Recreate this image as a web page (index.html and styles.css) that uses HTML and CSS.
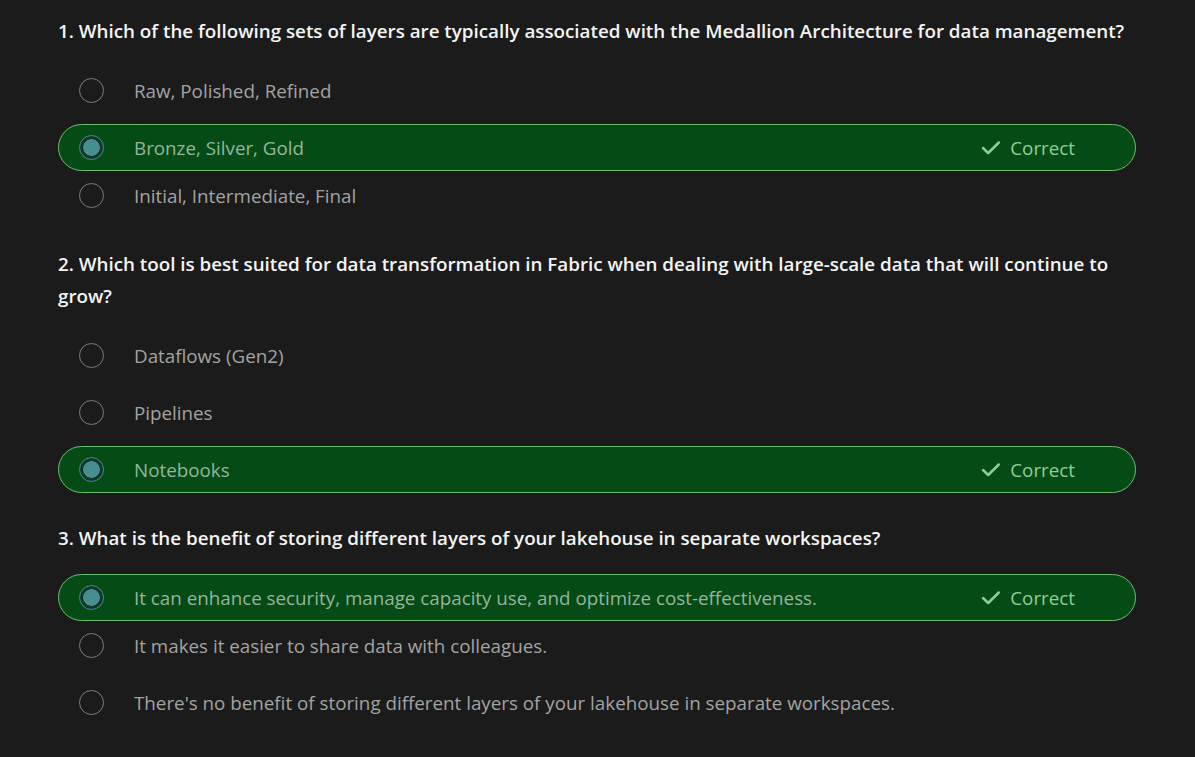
FILE: index.html
```html
<!DOCTYPE html>
<html lang="en">
<head>
<meta charset="utf-8">
<title>Knowledge check</title>
<link rel="stylesheet" href="styles.css">
</head>
<body>
<main class="quiz">
  <section class="question">
    <h2 class="q-title">1. Which of the following sets of layers are typically associated with the Medallion Architecture for data management?</h2>
    <ul class="options">
      <li class="option"><span class="radio"></span><span class="label">Raw, Polished, Refined</span></li>
      <li class="option correct"><span class="radio"></span><span class="label">Bronze, Silver, Gold</span><span class="status"><svg class="check" viewBox="0 0 20 16" width="20" height="16"><path d="M2 8 L7.2 13 L17.8 2.5" fill="none" stroke="currentColor" stroke-width="2.5" stroke-linecap="round" stroke-linejoin="round"/></svg>Correct</span></li>
      <li class="option"><span class="radio"></span><span class="label">Initial, Intermediate, Final</span></li>
    </ul>
  </section>
  <section class="question">
    <h2 class="q-title">2. Which tool is best suited for data transformation in Fabric when dealing with large-scale data that will continue to grow?</h2>
    <ul class="options">
      <li class="option"><span class="radio"></span><span class="label">Dataflows (Gen2)</span></li>
      <li class="option"><span class="radio"></span><span class="label">Pipelines</span></li>
      <li class="option correct"><span class="radio"></span><span class="label">Notebooks</span><span class="status"><svg class="check" viewBox="0 0 20 16" width="20" height="16"><path d="M2 8 L7.2 13 L17.8 2.5" fill="none" stroke="currentColor" stroke-width="2.5" stroke-linecap="round" stroke-linejoin="round"/></svg>Correct</span></li>
    </ul>
  </section>
  <section class="question">
    <h2 class="q-title">3. What is the benefit of storing different layers of your lakehouse in separate workspaces?</h2>
    <ul class="options">
      <li class="option correct"><span class="radio"></span><span class="label">It can enhance security, manage capacity use, and optimize cost-effectiveness.</span><span class="status"><svg class="check" viewBox="0 0 20 16" width="20" height="16"><path d="M2 8 L7.2 13 L17.8 2.5" fill="none" stroke="currentColor" stroke-width="2.5" stroke-linecap="round" stroke-linejoin="round"/></svg>Correct</span></li>
      <li class="option"><span class="radio"></span><span class="label">It makes it easier to share data with colleagues.</span></li>
      <li class="option"><span class="radio"></span><span class="label">There's no benefit of storing different layers of your lakehouse in separate workspaces.</span></li>
    </ul>
  </section>
</main>
</body>
</html>
```

FILE: styles.css
```css
html, body {
  margin: 0;
  padding: 0;
  background: #1b1b1b;
}

body {
  font-family: "Open Sans", "Noto Sans", "Liberation Sans", sans-serif;
  color: #a3a3a3;
}

.quiz {
  padding: 15px 59px 20px 58px;
}

.question + .question {
  margin-top: 29px;
}

.q-title {
  margin: 0;
  font-size: 18.8px;
  line-height: 32px;
  font-weight: 600;
  color: #f4f4f4;
}

.options {
  list-style: none;
  margin: 20px 0 0;
  padding: 0;
}

.option {
  box-sizing: border-box;
  height: 47px;
  display: flex;
  align-items: center;
  padding: 0 60px 0 20px;
  border: 1px solid transparent;
  border-radius: 24px;
  font-size: 18.8px;
}

.option + .option {
  margin-top: 10px;
}

.option.correct + .option {
  margin-top: 1px;
}

.radio {
  box-sizing: border-box;
  flex: none;
  width: 25px;
  height: 25px;
  border-radius: 50%;
  border: 1.5px solid #7d7d7d;
  margin-right: 30px;
}

.label {
  flex: 1;
  white-space: nowrap;
}

.option.correct {
  background: #054b16;
  border-color: #6fbd6f;
  color: #95b59c;
}

.option.correct .radio {
  border: 1px solid #3f8f8f;
  background: radial-gradient(circle, #468f8e 0 8px, #15372a 8.6px);
}

.status {
  display: flex;
  align-items: center;
  color: #91cf91;
  font-size: 18.8px;
}

.check {
  margin-right: 9px;
}
```
